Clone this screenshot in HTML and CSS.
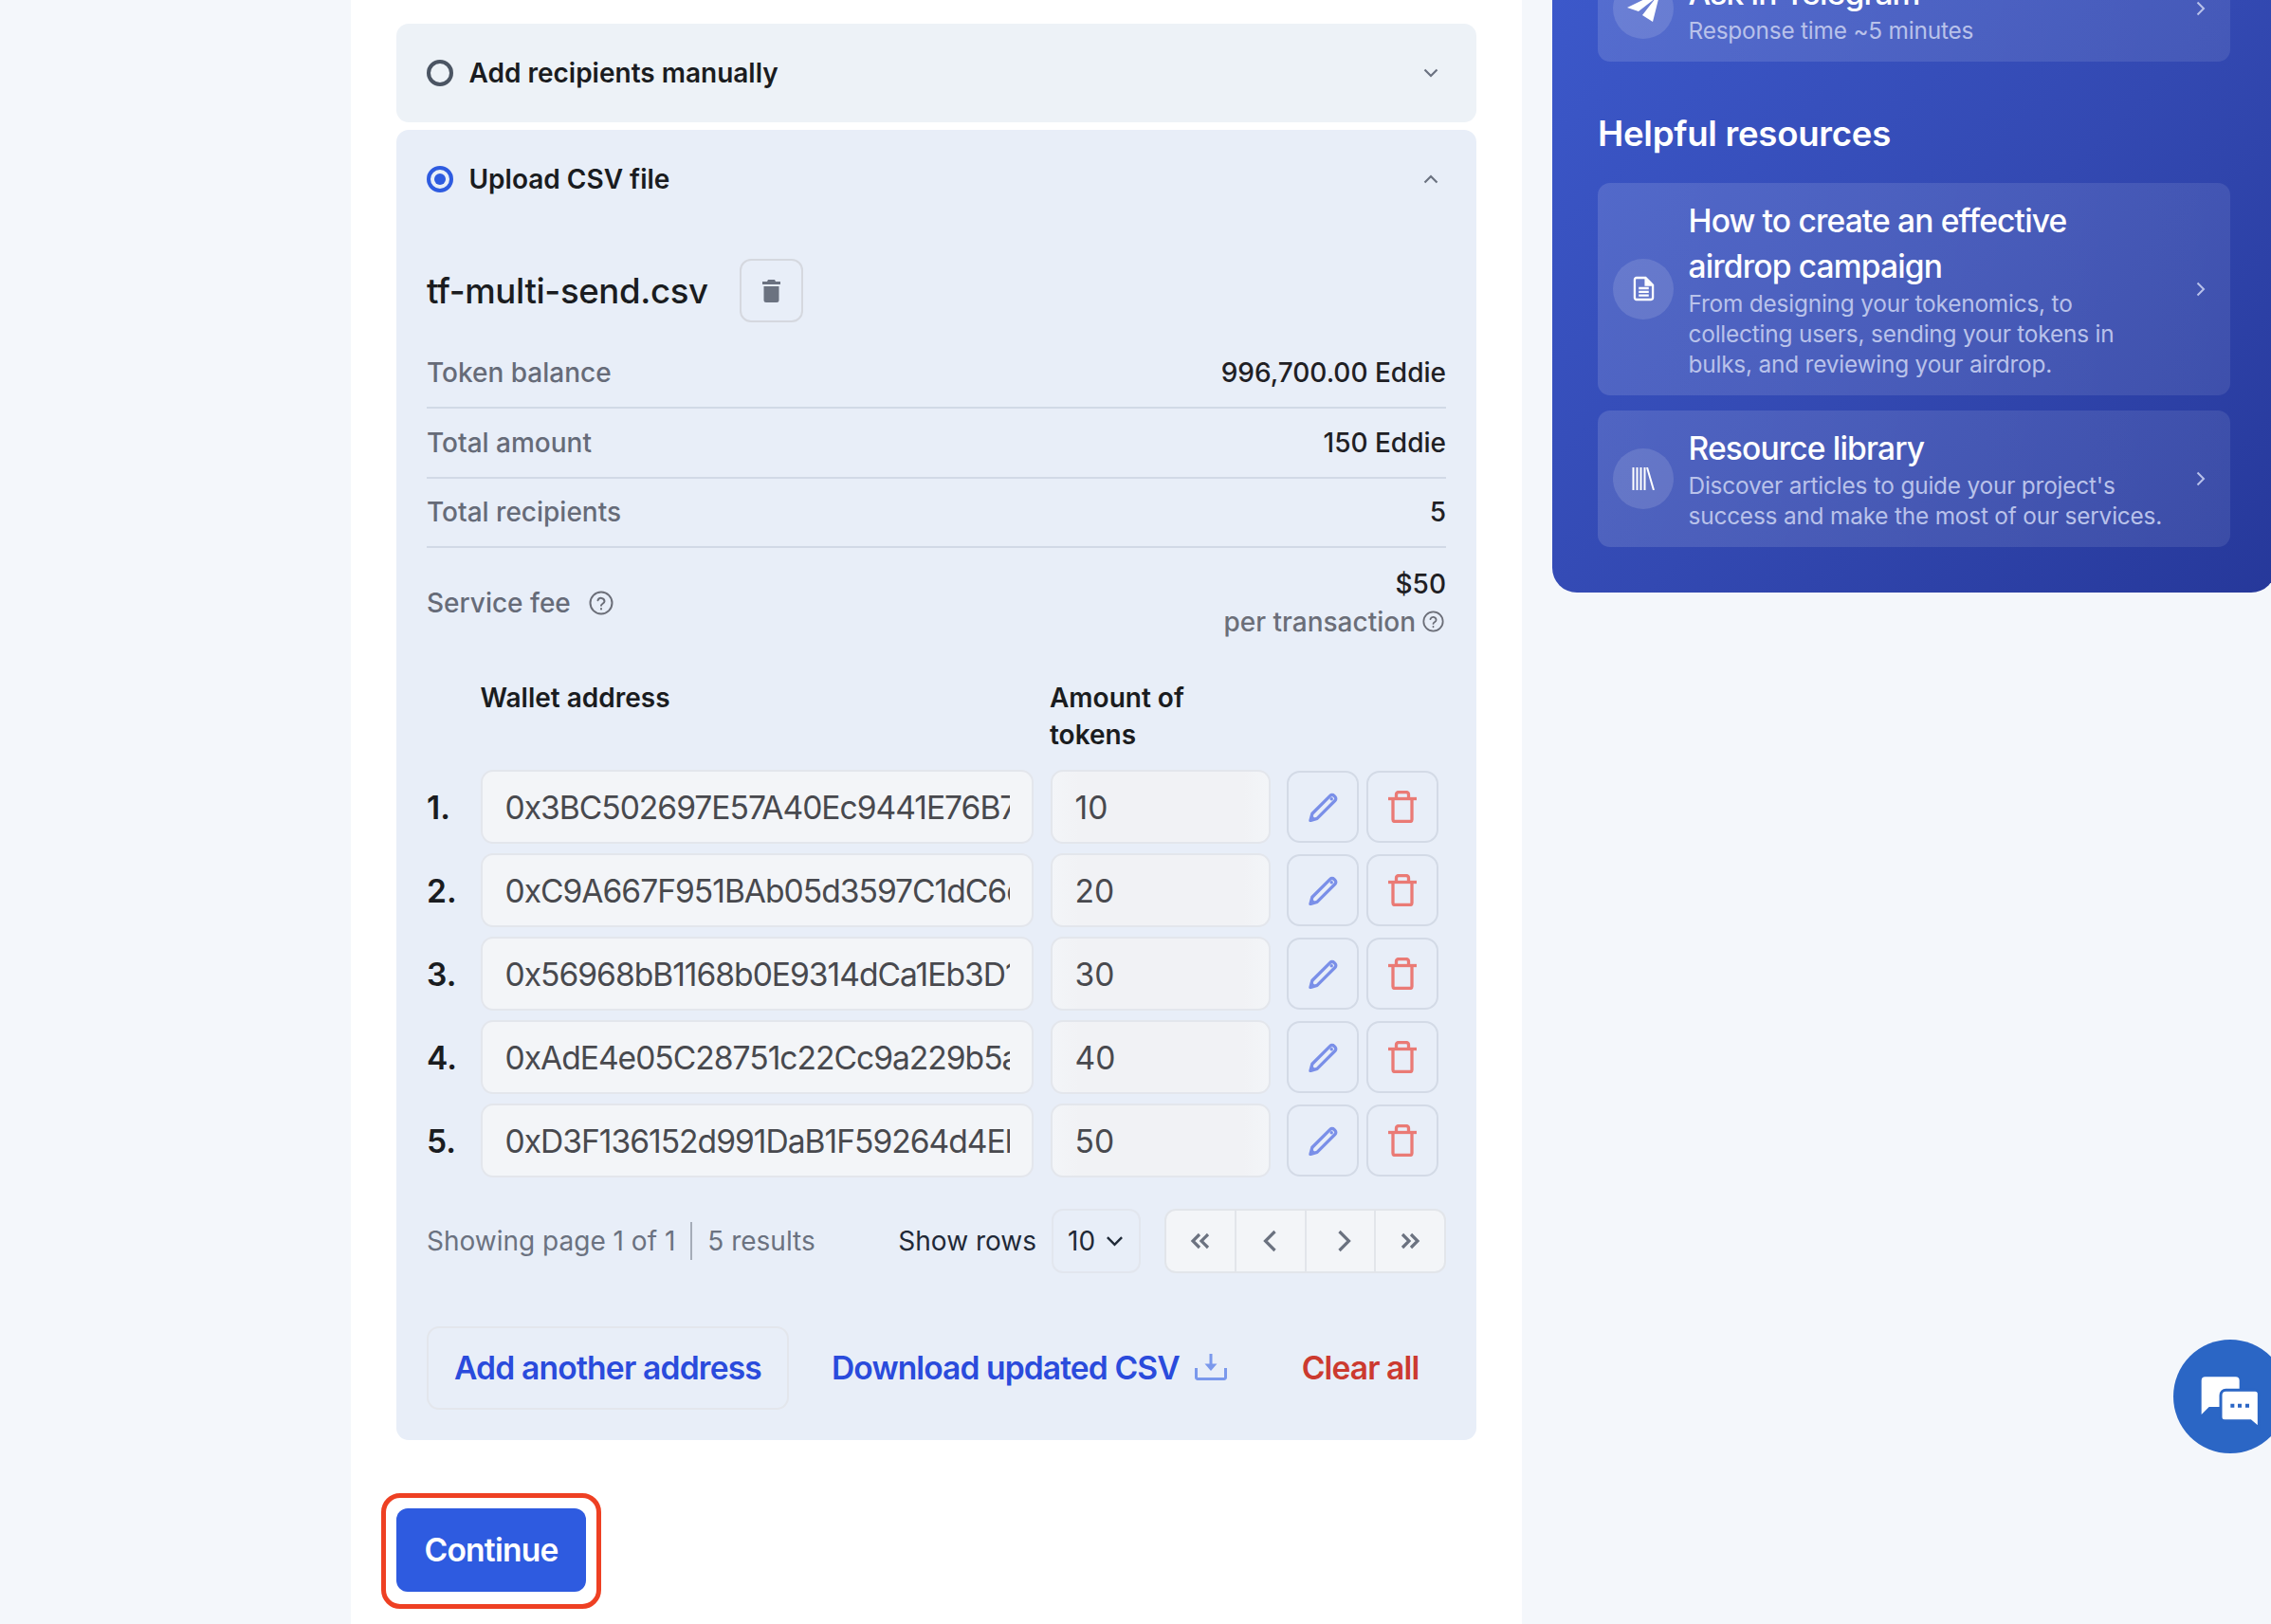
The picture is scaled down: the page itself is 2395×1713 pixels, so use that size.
FILE: index.html
```html
<!DOCTYPE html>
<html lang="en">
<head>
<meta charset="utf-8">
<title>Multi-send</title>
<link rel="stylesheet" href="styles.css">
</head>
<body>
<div class="page">
  <main class="main">
    <section class="acc acc-closed">
      <div class="acc-head">
        <span class="radio"></span>
        <span class="acc-title">Add recipients manually</span>
        <svg class="acc-chev" viewBox="0 0 16 10"><path d="M1.5 1.5 8 8l6.500-6.500"/></svg>
      </div>
    </section>
    <section class="acc acc-open">
      <div class="acc-head">
        <span class="radio radio-on"></span>
        <span class="acc-title">Upload CSV file</span>
        <svg class="acc-chev" viewBox="0 0 16 10"><path d="M1.500 8.500 8 2l6.500 6.500"/></svg>
      </div>
      <div class="acc-body">
        <div class="file">
          <span class="file-name">tf-multi-send.csv</span>
          <button class="file-del">
            <svg viewBox="0 0 19 24" width="19" height="24"><path class="solid-gray" d="M6 0h7l1 2h5v3H0V2h5zM1.500 7h16v14.500a2.500 2.500 0 0 1-2.500 2.500H4a2.500 2.500 0 0 1-2.500-2.500z"/></svg>
          </button>
        </div>
        <div class="stat"><span class="stat-label">Token balance</span><span class="stat-value">996,700.00 Eddie</span></div>
        <div class="stat"><span class="stat-label">Total amount</span><span class="stat-value">150 Eddie</span></div>
        <div class="stat"><span class="stat-label">Total recipients</span><span class="stat-value">5</span></div>
        <div class="fee">
          <div class="fee-left">
            <span class="stat-label">Service fee</span>
            <svg class="help help-big" viewBox="0 0 26 26"><circle cx="13" cy="13" r="11.500"/><path d="M9.500 10.300a3.600 3.600 0 0 1 7 .9c0 2.400-3.500 2.700-3.500 4.600"/><path d="M13 19v.6"/></svg>
          </div>
          <div class="fee-right">
            <span class="stat-value">$50</span>
            <span class="fee-per">per transaction
              <svg class="help help-small" viewBox="0 0 26 26"><circle cx="13" cy="13" r="11.500"/><path d="M9.500 10.300a3.600 3.600 0 0 1 7 .9c0 2.400-3.500 2.700-3.500 4.600"/><path d="M13 19v.6"/></svg>
            </span>
          </div>
        </div>

        <div class="thead">
          <div class="th th-wallet">Wallet address</div>
          <div class="th th-amount">Amount of tokens</div>
        </div>

        <div class="rows">
          <div class="row">
            <span class="num">1.</span>
            <div class="field field-addr"><span class="clip">0x3BC502697E57A40Ec9441E76B7</span></div>
            <div class="field field-amt">10</div>
            <button class="act"><svg class="ic-edit" viewBox="0 0 32 32"><use href="#pencil"/></svg></button>
            <button class="act"><svg class="ic-del" viewBox="0 0 30 34"><use href="#bin"/></svg></button>
          </div>
          <div class="row">
            <span class="num">2.</span>
            <div class="field field-addr"><span class="clip">0xC9A667F951BAb05d3597C1dC6d</span></div>
            <div class="field field-amt">20</div>
            <button class="act"><svg class="ic-edit" viewBox="0 0 32 32"><use href="#pencil"/></svg></button>
            <button class="act"><svg class="ic-del" viewBox="0 0 30 34"><use href="#bin"/></svg></button>
          </div>
          <div class="row">
            <span class="num">3.</span>
            <div class="field field-addr"><span class="clip">0x56968bB1168b0E9314dCa1Eb3D1</span></div>
            <div class="field field-amt">30</div>
            <button class="act"><svg class="ic-edit" viewBox="0 0 32 32"><use href="#pencil"/></svg></button>
            <button class="act"><svg class="ic-del" viewBox="0 0 30 34"><use href="#bin"/></svg></button>
          </div>
          <div class="row">
            <span class="num">4.</span>
            <div class="field field-addr"><span class="clip">0xAdE4e05C28751c22Cc9a229b5a</span></div>
            <div class="field field-amt">40</div>
            <button class="act"><svg class="ic-edit" viewBox="0 0 32 32"><use href="#pencil"/></svg></button>
            <button class="act"><svg class="ic-del" viewBox="0 0 30 34"><use href="#bin"/></svg></button>
          </div>
          <div class="row">
            <span class="num">5.</span>
            <div class="field field-addr"><span class="clip">0xD3F136152d991DaB1F59264d4Eb</span></div>
            <div class="field field-amt">50</div>
            <button class="act"><svg class="ic-edit" viewBox="0 0 32 32"><use href="#pencil"/></svg></button>
            <button class="act"><svg class="ic-del" viewBox="0 0 30 34"><use href="#bin"/></svg></button>
          </div>
        </div>

        <div class="pager-row">
          <span class="page-info">Showing page 1 of 1</span>
          <span class="page-total">5 results</span>
          <span class="rows-label">Show rows</span>
          <div class="rows-select">10
            <svg viewBox="0 0 20 12" width="19" height="12"><path d="M2 2l8 8 8-8"/></svg>
          </div>
          <div class="pager">
            <span class="pg"><svg viewBox="0 0 22 18" width="22" height="18"><path d="M10 2 3 9l7 7M19 2l-7 7 7 7"/></svg></span>
            <span class="pg"><svg viewBox="0 0 15 24" width="15" height="24"><path d="M12.500 2 2.500 12l10 10"/></svg></span>
            <span class="pg pg-next"><svg viewBox="0 0 15 24" width="15" height="24"><path d="M2.500 2l10 10-10 10"/></svg></span>
            <span class="pg"><svg viewBox="0 0 22 18" width="22" height="18"><path d="M3 2l7 7-7 7M12 2l7 7-7 7"/></svg></span>
          </div>
        </div>

        <div class="actions">
          <button class="btn-add">Add another address</button>
          <a class="link-dl">Download updated CSV
            <svg viewBox="0 0 34 28" width="34" height="28"><path d="M1.500 15v10a1.500 1.500 0 0 0 1.500 1.500h28a1.500 1.500 0 0 0 1.500-1.500V15" class="dl-line"/><path d="M17 0v12" class="dl-line"/><path d="M10.500 10.500h13L17 18z" class="dl-fill"/></svg>
          </a>
          <a class="link-clear">Clear all</a>
        </div>
      </div>
    </section>
    <div class="continue-wrap">
      <button class="continue">Continue</button>
      <span class="highlight"></span>
    </div>
  </main>

  <aside class="panel">
    <a class="card">
      <span class="card-ic">
        <svg viewBox="0 0 64 64" width="64" height="64"><path class="white" d="M50 14 15 31l12 4 18-14-14 18 11 7z"/></svg>
      </span>
      <span class="card-text">
        <span class="card-title">Ask in Telegram</span>
        <span class="card-desc">Response time ~5 minutes</span>
      </span>
      <svg class="card-chev" viewBox="0 0 10 16" width="10" height="16"><path d="M1.500 1.500 8 8l-6.500 6.500"/></svg>
    </a>

    <h2 class="panel-h">Helpful resources</h2>

    <a class="card">
      <span class="card-ic">
        <svg viewBox="0 0 24 28" width="23" height="27"><path class="line-w" d="M2 4a2 2 0 0 1 2-2h10l8 8v14a2 2 0 0 1-2 2H4a2 2 0 0 1-2-2z"/><path class="white" d="M13 2l9 9h-9z"/><path class="line-w" d="M6.500 13.500h11M6.500 17.500h11M6.500 21.500h11"/></svg>
      </span>
      <span class="card-text">
        <span class="card-title">How to create an effective airdrop campaign</span>
        <span class="card-desc">From designing your tokenomics, to collecting users, sending your tokens in bulks, and reviewing your airdrop.</span>
      </span>
      <svg class="card-chev" viewBox="0 0 10 16" width="10" height="16"><path d="M1.500 1.500 8 8l-6.500 6.500"/></svg>
    </a>

    <a class="card">
      <span class="card-ic">
        <svg viewBox="0 0 24 24" width="24" height="24"><path class="line-thin" d="M1.500 0v24M5.500 0v24M9.500 0v24M13.500 0v24M16 0l7 24"/></svg>
      </span>
      <span class="card-text">
        <span class="card-title">Resource library</span>
        <span class="card-desc">Discover articles to guide your project's success and make the most of our services.</span>
      </span>
      <svg class="card-chev" viewBox="0 0 10 16" width="10" height="16"><path d="M1.500 1.500 8 8l-6.500 6.500"/></svg>
    </a>
  </aside>
</div>

<div class="chat">
  <svg viewBox="0 0 360 360" width="120" height="120">
    <path class="chat-w" d="M101 118h96a12 12 0 0 1 12 12v83H113l-24 24V130a12 12 0 0 1 12-12z"/>
    <path class="chat-f" d="M166 160h93a12 12 0 0 1 12 12v108l-27-23H162a12 12 0 0 1-12-12v-69a16 16 0 0 1 16-16z"/>
    <path class="chat-d" d="M181 203h12v12h-12zM204 203h12v12h-12zM228 203h12v12h-12z"/>
  </svg>
</div>

<svg class="defs" width="0" height="0">
  <defs>
    <g id="pencil">
      <path d="M2 30.500 4 23 23.500 3.500a3 3 0 0 1 4.300 0l1 1a3 3 0 0 1 0 4.300L9.300 28.300z" fill="none" stroke="currentColor" stroke-width="3.400" stroke-linejoin="round"/>
      <path d="M1.500 31 3 24l5.500 5.500z" fill="currentColor"/>
      <circle cx="25" cy="7" r="1.800" fill="currentColor"/>
    </g>
    <g id="bin" fill="none" stroke="currentColor" stroke-width="3.300">
      <path d="M0 8.500h30"/>
      <path d="M5 8.500v22a2 2 0 0 0 2 2h16a2 2 0 0 0 2-2v-22"/>
      <path d="M8.500 8.500V4A2.500 2.500 0 0 1 11 1.500h8A2.500 2.500 0 0 1 21.500 4v4.500"/>
    </g>
  </defs>
</svg>
</body>
</html>
```
FILE: styles.css
```css
* { box-sizing: border-box; }
html, body { margin: 0; height: 1713px; overflow: hidden; }
body {
  background: #f4f7fb;
  font-family: Inter, "Liberation Sans", sans-serif;
  color: #1f2024;
  position: relative;
}
button { font-family: inherit; background: none; cursor: pointer; padding: 0; }
.page { display: flex; align-items: flex-start; padding-left: 370px; }
.defs { position: absolute; }

/* main column */
.main {
  flex: none;
  width: 1235px;
  height: 1713px;
  background: #fff;
  padding: 25px 48px 0;
}
.acc { border-radius: 13px; padding: 0 32px; }
.acc-closed { background: #edf2f7; height: 104px; margin-bottom: 8px; }
.acc-open { background: #e8eef8; height: 1382px; }
.acc-head { display: flex; align-items: center; height: 104px; }
.radio {
  flex: none;
  width: 28px;
  height: 28px;
  border-radius: 50%;
  border: 4px solid #4b5563;
  margin-right: 16.500px;
}
.radio-on { border-color: #2e5be0; position: relative; }
.radio-on::after {
  content: "";
  position: absolute;
  inset: 4px;
  border-radius: 50%;
  background: #2e5be0;
}
.acc-title { font-size: 28px; font-weight: 600; flex: 1; color: #1a1c20; }
.acc-chev { width: 16px; height: 10px; margin-right: 8px; fill: none; stroke: #6b7280; stroke-width: 2.2; }

.acc-body { padding-top: 32px; }
.file { display: flex; align-items: center; height: 67px; gap: 33.500px; margin-bottom: 17px; }
.file-name { font-size: 36.6px; font-weight: 500; letter-spacing: -.36px; color: #1a1c20; }
.file-del {
  width: 67px;
  height: 67px;
  border: 2px solid #d5d8df;
  border-radius: 12px;
  display: flex;
  align-items: center;
  justify-content: center;
}
.solid-gray { fill: #6b7280; }

.stat {
  display: flex;
  justify-content: space-between;
  align-items: center;
  height: 73.800px;
  border-bottom: 2px solid #d1d9e6;
}
.stat-label { font-size: 28px; font-weight: 450; color: #666b78; }
.stat-value { font-size: 28px; font-weight: 500; color: #1f2024; }
.fee {
  display: flex;
  justify-content: space-between;
  align-items: center;
  padding-top: 17.500px;
}
.fee-left { display: flex; align-items: center; gap: 19px; }
.fee-right { display: flex; flex-direction: column; align-items: flex-end; line-height: 40px; }
.fee-per { font-size: 28px; font-weight: 500; color: #6b6e78; display: flex; align-items: center; gap: 7px; }
.help { fill: none; stroke: #6b6e78; stroke-width: 2; stroke-linecap: round; }
.help-big { width: 26px; height: 26px; }
.help-small { width: 23px; height: 23px; margin-right: 2px; }

.thead { display: flex; margin-top: 41px; padding-left: 56.500px; font-size: 28px; font-weight: 600; line-height: 39px; color: #1a1c20; }
.th-wallet { width: 600.500px; }
.th-amount { width: 190px; }
.rows { display: flex; flex-direction: column; gap: 10px; margin-top: 17.200px; }
.row { display: flex; align-items: center; height: 78px; }
.num { width: 57px; font-size: 33.6px; font-weight: 600; color: #1a1c20; }
.field {
  height: 78px;
  border: 2px solid #e3e6ec;
  border-radius: 13px;
  background: #f3f5f8;
  font-size: 33.6px;
  color: #48494e;
  display: flex;
  align-items: center;
  padding: 0 23.500px;
}
.field-addr { width: 583px; margin-right: 18px; }
.clip { overflow: hidden; white-space: nowrap; display: block; width: 100%; letter-spacing: -1px; }
.field-amt {
  width: 232px;
  margin-right: 17px;
  background: linear-gradient(90deg, #f3f5f8 0, #f1f2f5 12%, #f1f2f5 88%, #f3f5f8 100%);
}
.act {
  width: 76px;
  height: 76px;
  margin-right: 8px;
  border: 2px solid #d3dae6;
  border-radius: 14px;
  display: flex;
  align-items: center;
  justify-content: center;
}
.ic-edit { width: 31px; height: 31px; color: #7a8fe8; }
.ic-del { width: 30px; height: 34px; color: #ea7a75; }

.pager-row { display: flex; align-items: center; height: 68px; margin-top: 33px; font-size: 28px; }
.page-info { color: #6b7280; padding-right: 16px; border-right: 2px solid #a5acb8; line-height: 40px; }
.page-total { color: #6b7280; padding-left: 16px; flex: 1; }
.rows-label { color: #1f2937; margin-right: 16px; }
.rows-select {
  width: 94px;
  height: 68px;
  border: 2px solid #e2e6ee;
  border-radius: 12px;
  display: flex;
  align-items: center;
  gap: 11px;
  padding-left: 15px;
  color: #1f2937;
  margin-right: 25px;
}
.rows-select svg { fill: none; stroke: #1f2937; stroke-width: 2.600; }
.pager {
  display: flex;
  width: 297px;
  height: 68px;
  border: 2px solid #e2e5ea;
  border-radius: 12px;
  background: #f3f5f8;
  overflow: hidden;
}
.pg { flex: 1 1 0; display: flex; align-items: center; justify-content: center; border-right: 2px solid #e2e5ea; }
.pg:last-child { border-right: 0; }
.pg-next svg { margin-left: 8px; }
.pg svg { fill: none; stroke: #6b7280; stroke-width: 3.200; }

.actions { display: flex; align-items: center; margin-top: 56px; font-size: 33.6px; font-weight: 600; letter-spacing: -.9px; }
.btn-add {
  width: 382px;
  height: 88px;
  border: 2px solid #e3e6ec;
  border-radius: 13px;
  font-size: 33.6px;
  font-weight: 600;
  letter-spacing: -.8px;
  color: #2a4bdc;
  padding-bottom: 2px;
}
.link-dl { display: flex; align-items: center; gap: 16px; margin-left: 45px; color: #2a4bdc; padding-bottom: 2px; }
.dl-line { fill: none; stroke: #7a98ec; stroke-width: 3; }
.dl-fill { fill: #7a98ec; }
.link-clear { margin-left: 79px; color: #cc3a2f; padding-bottom: 2px; }

.continue-wrap { position: relative; display: inline-block; margin-top: 72px; }
.continue {
  display: block;
  width: 200px;
  height: 88px;
  border: 0;
  border-radius: 12px;
  background: #2e5be0;
  color: #fff;
  font-size: 33.6px;
  font-weight: 600;
  letter-spacing: -.8px;
  padding-bottom: 2px;
}
.highlight {
  position: absolute;
  inset: -16px -16px -18px -16px;
  border: 5px solid #ee4023;
  border-radius: 20px;
}

/* right panel */
.panel {
  flex: none;
  width: 763px;
  margin: -95.500px 0 0 32px;
  padding: 48px;
  border-radius: 0 0 26px 26px;
  background: linear-gradient(135deg, #3d5acd 0%, #3349b2 55%, #26389a 100%);
  color: #fff;
}
.panel-h { margin: 52px 0 28px; font-size: 36.6px; line-height: 48px; font-weight: 600; letter-spacing: -.27px; }
.card {
  display: flex;
  align-items: center;
  padding: 16px 26px 16px 16px;
  border-radius: 13px;
  background: linear-gradient(100deg, rgba(255,255,255,.13) 0%, rgba(255,255,255,.09) 100%);
  margin-bottom: 16px;
}
.card:last-child { margin-bottom: 0; }
.card-ic {
  flex: none;
  width: 64px;
  height: 64px;
  border-radius: 50%;
  background: rgba(255,255,255,.13);
  display: flex;
  align-items: center;
  justify-content: center;
  margin-right: 15.500px;
}
.card-text { width: 510px; margin-right: auto; display: block; }
.card-title { display: block; font-size: 33.6px; line-height: 48px; font-weight: 550; letter-spacing: -.85px; }
.card-desc { display: block; font-size: 24.400px; line-height: 32px; letter-spacing: -.2px; color: #b9c2ea; position: relative; top: -1px; }
.card-chev { flex: none; fill: none; stroke: #b9c2ea; stroke-width: 2; }
.white { fill: #fff; }
.line-w { fill: none; stroke: #fff; stroke-width: 2.400; }
.line-thin { fill: none; stroke: #fff; stroke-width: 2; }

/* chat launcher */
.chat {
  position: fixed;
  left: 2292px;
  top: 1413px;
  width: 120px;
  height: 120px;
  border-radius: 50%;
  background: #2b66c5;
}
.chat-w { fill: #fff; }
.chat-f { fill: #fff; stroke: #2b66c5; stroke-width: 9; }
.chat-d { fill: #2b66c5; }
```
